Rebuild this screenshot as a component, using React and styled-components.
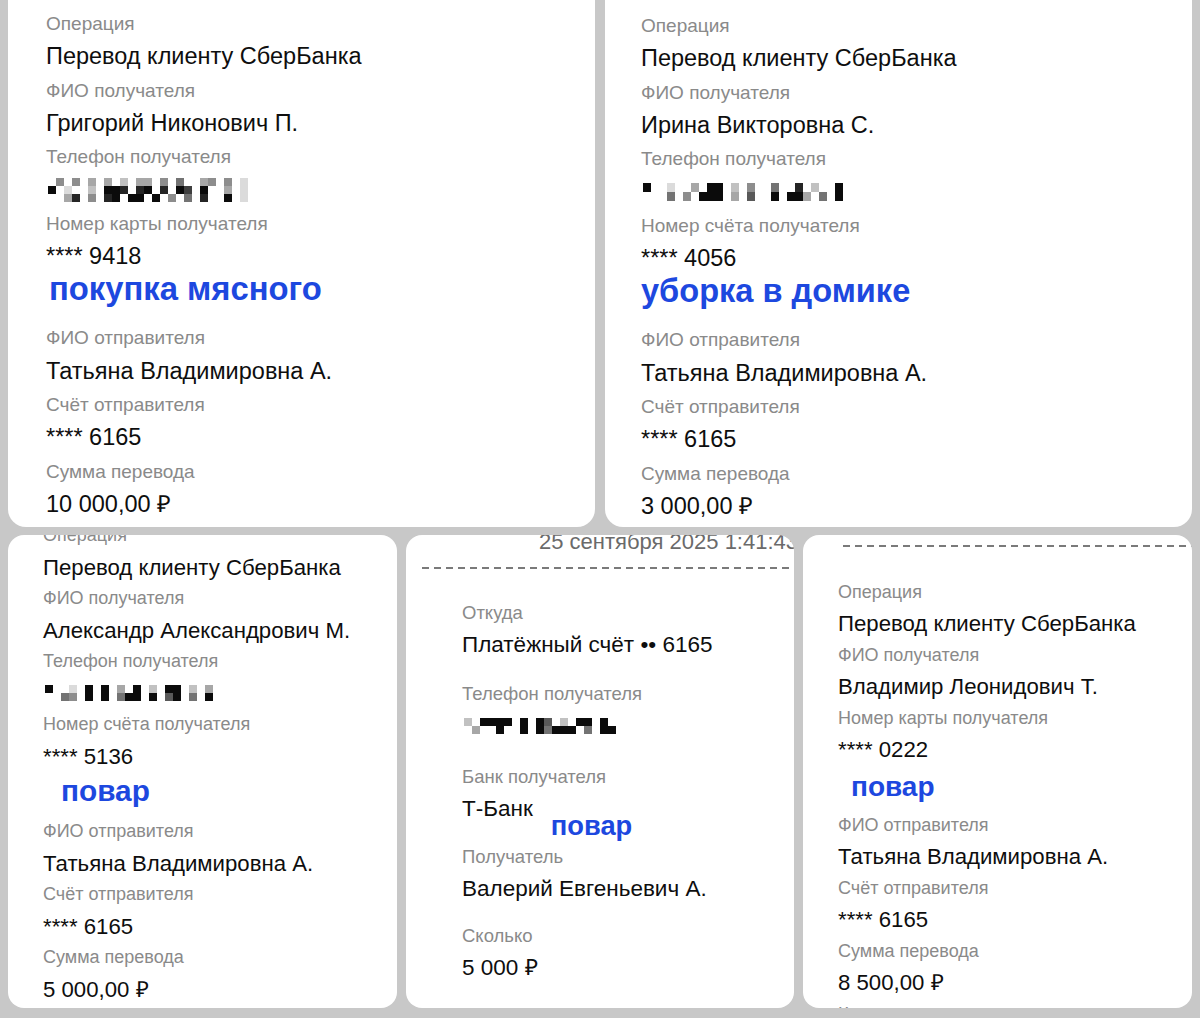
import React from 'react';
import styled, { createGlobalStyle } from 'styled-components';

const GlobalStyle = createGlobalStyle`
  html, body {
    margin: 0;
    padding: 0;
    background: #c8c8c8;
  }
`;

const Page = styled.div`
  width: 1200px;
  height: 1018px;
  overflow: hidden;
  background: #c8c8c8;
  font-family: "Liberation Sans", Arial, sans-serif;
  display: flex;
  flex-direction: column;
  gap: 8px;
  padding: 0 8px;
  box-sizing: border-box;
`;

const TopRow = styled.div`
  display: grid;
  grid-template-columns: 587px 587px;
  column-gap: 10px;
  height: 527px;
`;

const BottomRow = styled.div`
  display: grid;
  grid-template-columns: 389px 388px 389px;
  column-gap: 9px;
  height: 473px;
`;

const Card = styled.div`
  background: #fff;
  overflow: hidden;
  box-sizing: border-box;
  border-radius: ${p => (p.$top ? '0 0 18px 18px' : '16px')};
  padding: ${p => p.$pad};
  --label: ${p => p.$label};
  --value: ${p => p.$value};
  --lh: ${p => p.$lh};
`;

const Body = styled.div`
  display: flex;
  flex-direction: column;
  align-items: flex-start;
  margin-top: ${p => p.$shift || '0px'};
`;

const Label = styled.div`
  font-size: var(--label);
  line-height: var(--lh);
  color: #8a8a8a;
  white-space: nowrap;
`;

const Value = styled.div`
  font-size: var(--value);
  line-height: var(--lh);
  color: #0e0e0e;
  white-space: nowrap;
`;

const Note = styled.div`
  font-weight: 700;
  color: #1d48df;
  white-space: nowrap;
  font-size: ${p => p.$size};
  line-height: ${p => p.$lh};
  margin: ${p => p.$margin};
`;

const Group = styled.div`
  display: flex;
  flex-direction: column;
  align-items: flex-start;
  margin-bottom: ${p => p.$gap || '0px'};
`;

const InlineRow = styled.div`
  display: flex;
  align-items: flex-start;
  gap: 18px;
`;

const FloatNote = styled(Note)`
  transform: translateY(${p => p.$drop});
`;

const DateLine = styled.div`
  font-size: 22px;
  line-height: 26px;
  color: #6a6a6a;
  white-space: nowrap;
  margin: -6px 0 0 77px;
`;

const Dashes = styled.div`
  height: 1.5px;
  width: ${p => p.$width};
  margin: ${p => p.$margin};
  background-image: linear-gradient(to right, #7a7a7a 0 7px, transparent 7px 12px);
  background-size: 12px 1.5px;
  background-repeat: repeat-x;
`;

const MosaicWrap = styled.div`
  height: var(--lh);
  display: flex;
  align-items: center;
  padding-left: 2px;
`;

const Mosaic = ({ rows, cw = 8, ch = 8 }) => {
  const width = Math.max(...rows.map(r => r.length)) * cw;
  const height = rows.length * ch;
  return (
    <MosaicWrap>
      <svg width={width} height={height} viewBox={`0 0 ${width} ${height}`}>
        {rows.map((row, y) =>
          row.split('').map((c, x) => {
            if (c === ' ') return null;
            const v = 245 - parseInt(c, 10) * 26;
            return (
              <rect
                key={`${x}-${y}`}
                x={x * cw}
                y={y * ch}
                width={cw}
                height={ch}
                fill={`rgb(${v},${v},${v})`}
              />
            );
          })
        )}
      </svg>
    </MosaicWrap>
  );
};

const Field = ({ label, value }) => (
  <>
    <Label>{label}</Label>
    <Value>{value}</Value>
  </>
);

const App = () => (
  <Page>
    <GlobalStyle />
    <TopRow>
      <Card $top $pad="7px 0 0 38px" $label="19px" $value="23.5px" $lh="33.3px">
        <Body>
          <Field label="Операция" value="Перевод клиенту СберБанка" />
          <Field label="ФИО получателя" value="Григорий Никонович П." />
          <Label>Телефон получателя</Label>
          <Mosaic
            rows={[
              ' 4 4 3 3 2 33 4 5  34 4 1',
              '9 1  2 998 89 8 97 9  3 1',
              '  38 4 89 99 9 4 5 8  9 1',
            ]}
          />
          <Field label="Номер карты получателя" value="**** 9418" />
          <Note $size="32.8px" $lh="31px" $margin="0 0 17px 3px">покупка мясного</Note>
          <Field label="ФИО отправителя" value="Татьяна Владимировна А." />
          <Field label="Счёт отправителя" value="**** 6165" />
          <Field label="Сумма перевода" value="10 000,00 ₽" />
        </Body>
      </Card>
      <Card $top $pad="9px 0 0 36px" $label="19px" $value="23.5px" $lh="33.3px">
        <Body>
          <Field label="Операция" value="Перевод клиенту СберБанка" />
          <Field label="ФИО получателя" value="Ирина Викторовна С." />
          <Label>Телефон получателя</Label>
          <Mosaic
            cw={8}
            ch={9}
            rows={[
              '9  1  3 99 2 4  5  8 2  9',
              '   5 4 999 3 6  9 993 5 9',
            ]}
          />
          <Field label="Номер счёта получателя" value="**** 4056" />
          <Note $size="32.6px" $lh="31px" $margin="0 0 17px 0">уборка в домике</Note>
          <Field label="ФИО отправителя" value="Татьяна Владимировна А." />
          <Field label="Счёт отправителя" value="**** 6165" />
          <Field label="Сумма перевода" value="3 000,00 ₽" />
        </Body>
      </Card>
    </TopRow>
    <BottomRow>
      <Card $pad="0 0 0 35px" $label="18px" $value="22.2px" $lh="31.5px">
        <Body $shift="-15px">
          <Field label="Операция" value="Перевод клиенту СберБанка" />
          <Field label="ФИО получателя" value="Александр Александрович М." />
          <Label>Телефон получателя</Label>
          <Mosaic
            rows={[
              '9  1 9 9 3 9 2 99 2 3',
              '  54 9 9 599 9 69 5 9',
            ]}
          />
          <Field label="Номер счёта получателя" value="**** 5136" />
          <Note $size="29.8px" $lh="34px" $margin="2px 0 8px 18px">повар</Note>
          <Field label="ФИО отправителя" value="Татьяна Владимировна А." />
          <Field label="Счёт отправителя" value="**** 6165" />
          <Field label="Сумма перевода" value="5 000,00 ₽" />
        </Body>
      </Card>
      <Card $pad="0 0 0 56px" $label="18.5px" $value="22.5px" $lh="32px">
        <Body>
          <DateLine>25 сентября 2025 1:41:43</DateLine>
          <Dashes $width="380px" $margin="12px 0 28px -40px" />
          <Group $gap="17px">
            <Field label="Откуда" value="Платёжный счёт •• 6165" />
          </Group>
          <Group $gap="19px">
            <Label>Телефон получателя</Label>
            <Mosaic
              rows={[
                '2 9999 9 96 2 99 9',
                ' 3  9  9 95999 5 99',
              ]}
            />
          </Group>
          <Group $gap="16px">
            <Label>Банк получателя</Label>
            <InlineRow>
              <Value>Т-Банк</Value>
              <FloatNote $size="27.3px" $lh="32px" $margin="0" $drop="17px">повар</FloatNote>
            </InlineRow>
          </Group>
          <Group $gap="15px">
            <Field label="Получатель" value="Валерий Евгеньевич А." />
          </Group>
          <Group>
            <Field label="Сколько" value="5 000 ₽" />
          </Group>
        </Body>
      </Card>
      <Card $pad="10px 0 0 35px" $label="18px" $value="22.2px" $lh="31.5px">
        <Body>
          <Dashes $width="360px" $margin="0 0 30px 5px" />
          <Field label="Операция" value="Перевод клиенту СберБанка" />
          <Field label="ФИО получателя" value="Владимир Леонидович Т." />
          <Field label="Номер карты получателя" value="**** 0222" />
          <Note $size="28px" $lh="34px" $margin="4px 0 6px 13px">повар</Note>
          <Field label="ФИО отправителя" value="Татьяна Владимировна А." />
          <Field label="Счёт отправителя" value="**** 6165" />
          <Field label="Сумма перевода" value="8 500,00 ₽" />
          <Label>Комиссия</Label>
        </Body>
      </Card>
    </BottomRow>
  </Page>
);

export default App;
